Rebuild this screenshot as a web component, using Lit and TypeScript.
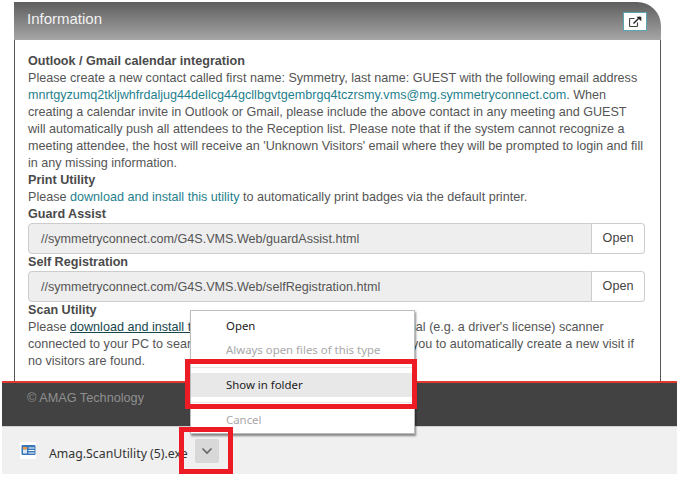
import { LitElement, html, css } from "lit";
import { customElement } from "lit/decorators.js";

@customElement("app-root")
export class AppRoot extends LitElement {
  static styles = css`
    :host { display: block; position: relative; width: 685px; height: 492px; background: #fff; overflow: hidden;
      font-family: "Liberation Sans", Arial, sans-serif; font-size: 12.6px; line-height: 17px; color: #555; }
    .page { display: flex; flex-direction: column; margin: 0 8px 0 2px; padding-top: 2px; }
    .panel { margin: 0 16px 0 12px; display: flex; flex-direction: column; }
    .head { height: 38px; box-sizing: border-box; display: flex; align-items: flex-start; justify-content: space-between;
      background: linear-gradient(#5e5e5e, #a6a6a6); border-top-right-radius: 24px; padding: 10px 14px 0 13px; }
    .title { color: #f2f2f2; font-size: 15px; line-height: 17px; margin-top: -2px; }
    .ext { width: 24px; height: 19px; box-sizing: border-box; background: #fff; border: 1px solid #5ba6b3; display: flex;
      align-items: center; justify-content: center; }
    .body { height: 341px; box-sizing: border-box; background: #fff; border: solid #555; border-width: 0 1px;
      padding: 13px 15px 0 13px; }
    .h { font-weight: bold; color: #4a4a4a; }
    .body a { color: #1f7f8e; text-decoration: none; }
    .body a.hover { color: #17464d; text-decoration: underline; }
    .group { display: flex; height: 31px; }
    .field { flex: 1; box-sizing: border-box; background: #eee; border: 1px solid #ccc; border-radius: 4px 0 0 4px;
      padding: 0 12px; line-height: 30px; color: #555; }
    .open { width: 53px; box-sizing: border-box; background: #fff; border: 1px solid #ccc; border-left: 0;
      border-radius: 0 4px 4px 0; text-align: center; line-height: 28px; color: #444; }
    .foot { border-top: 2px solid #e03a2e; background: #424242; height: 45px; box-sizing: border-box; padding: 7px 0 0 25px;
      color: #8f8f8f; font-size: 12.7px; }
    .foot span { line-height: 17px; }
    .bar { margin-left: 2px; width: 675px; height: 48px; box-sizing: border-box; border-top: 1px solid #d0d0d0; background: #f0f0f0;
      display: flex; align-items: center; padding: 0 0 0 18px; font-size: 13px; color: #333; }
    .file { margin-left: 11px; margin-top: 6px; width: 146px; white-space: nowrap; font-family: "Noto Sans", sans-serif; font-size: 12.3px; }
    .chev { width: 24px; height: 24px; background: #d8d8d8; border-radius: 2px; display: flex; align-items: center;
      justify-content: center; margin-top: 1px; }
    .icon { display: block; margin-top: -1px; }
    .menu { position: absolute; left: 190px; top: 310px; width: 225px; height: 124px; box-sizing: border-box; background: #fff;
      border: 1px solid #bdbdbd; box-shadow: 1px 2px 2px rgba(0,0,0,.45); font-family: "Noto Sans", sans-serif; font-size: 11.4px;
      line-height: 24px; color: #222; display: flex; flex-direction: column; padding-top: 3px; }
    .item { height: 24px; padding-left: 35px; }
    .item.off { color: #a8a8a8; }
    .item.hover { background: #e8e8e8; }
    .sep { height: 1px; background: #e6e6e6; margin: 5px 0; }
    .mark { position: absolute; box-sizing: border-box; border: 5px solid #ed1c24; }
    .mark.a { left: 185px; top: 359px; width: 232px; height: 50px; }
    .mark.b { left: 179px; top: 427px; width: 54px; height: 47px; }
  `;

  render() {
    return html`
      <div class="page">
        <div class="panel">
          <div class="head">
            <span class="title">Information</span>
            <span class="ext">
              <svg width="13" height="12" viewBox="0 0 13 12" fill="none" stroke="#444" stroke-width="1.2">
                <path d="M8.5 6.5v3a1 1 0 0 1-1 1h-6a1 1 0 0 1-1-1v-6a1 1 0 0 1 1-1h4" />
                <path d="M4.5 7.5 11 1" stroke-width="1.5" stroke="#222" />
                <path d="M7.5.7h4.8v4.6z" fill="#222" stroke="none" />
              </svg>
            </span>
          </div>
          <div class="body">
            <div class="h">Outlook / Gmail calendar integration</div>
            <div>Please create a new contact called first name: Symmetry, last name: GUEST with the following email address
              <a href="#">mnrtgyzumq2tkljwhfrdaljug44dellcg44gcllbgvtgembrgq4tczrsmy.vms@mg.symmetryconnect.com</a>. When
              creating a calendar invite in Outlook or Gmail, please include the above contact in any meeting and GUEST
              will automatically push all attendees to the Reception list. Please note that if the system cannot recognize a
              meeting attendee, the host will receive an 'Unknown Visitors' email where they will be prompted to login and fill
              in any missing information.</div>
            <div class="h">Print Utility</div>
            <div>Please <a href="#">download and install this utility</a> to automatically print badges via the default printer.</div>
            <div class="h">Guard Assist</div>
            <div class="group"><div class="field">//symmetryconnect.com/G4S.VMS.Web/guardAssist.html</div><div class="open">Open</div></div>
            <div class="h">Self Registration</div>
            <div class="group"><div class="field">//symmetryconnect.com/G4S.VMS.Web/selfRegistration.html</div><div class="open">Open</div></div>
            <div class="h">Scan Utility</div>
            <div>Please <a class="hover" href="#">download and install this utility</a> so you can use a USB credential (e.g. a driver's license) scanner
              connected to your PC to search for visitors by ID. This will also allow you to automatically create a new visit if
              no visitors are found.</div>
          </div>
        </div>
        <div class="foot"><span>© AMAG Technology</span></div>
      </div>
      <div class="bar">
        <svg class="icon" width="18" height="17" viewBox="0 0 18 17">
          <rect x="0" y="0" width="16" height="17" fill="#fff" />
          <rect x="1.5" y="3" width="14" height="10" rx="1" fill="#3b78b8" />
          <rect x="3" y="5" width="4" height="2.5" fill="#ee9a3c" />
          <rect x="3" y="7.5" width="4" height="4" fill="#d8e6f4" />
          <path d="M8.5 6h6M8.5 8.5h6M8.5 11h6" stroke="#fff" />
        </svg>
        <span class="file">Amag.ScanUtility (5).exe</span>
        <span class="chev">
          <svg width="12" height="8" viewBox="0 0 12 8" fill="none" stroke="#666" stroke-width="1.6"><path d="M1.5 1.5 6 6l4.5-4.5" /></svg>
        </span>
      </div>
      <div class="menu">
        <div class="item">Open</div>
        <div class="item off">Always open files of this type</div>
        <div class="sep"></div>
        <div class="item hover">Show in folder</div>
        <div class="sep"></div>
        <div class="item off">Cancel</div>
      </div>
      <div class="mark a"></div>
      <div class="mark b"></div>
    `;
  }
}
